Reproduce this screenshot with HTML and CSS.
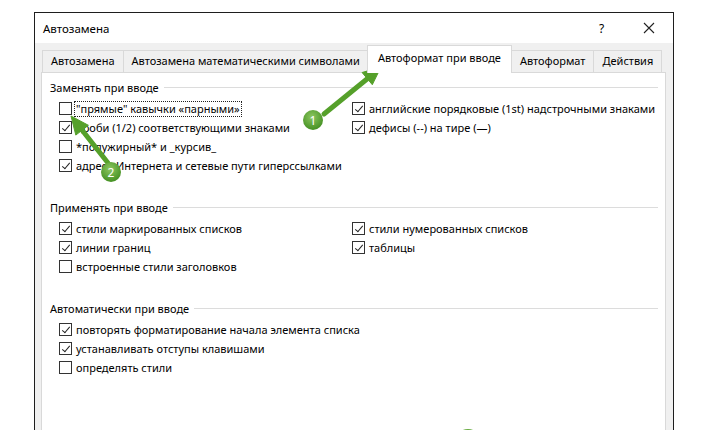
FILE: index.html
```html
<!DOCTYPE html>
<html lang="ru">
<head>
    <meta charset="UTF-8">
    <title>Автозамена</title>
    <link rel="stylesheet" href="styles.css">
</head>
<body>
    <div class="dialog">
        <div class="titlebar">
            <span class="title">Автозамена</span>
            <span class="help">?</span>
            <svg class="close" width="12" height="12" viewBox="0 0 12 12">
                <path d="M1 1 L11 11 M11 1 L1 11" stroke="#222" stroke-width="1.1" fill="none"/>
            </svg>
        </div>
        <div class="body">
            <div class="tabs">
                <div class="tab">Автозамена</div>
                <div class="tab">Автозамена математическими символами</div>
                <div class="tab active">Автоформат при вводе</div>
                <div class="tab">Автоформат</div>
                <div class="tab">Действия</div>
            </div>
            <div class="panel">
                <div class="group">
                    <div class="group-title"><span>Заменять при вводе</span><i></i></div>
                    <div class="options">
                        <div class="col">
                            <div class="opt"><span class="box"></span><span class="focus">"прямые" кавычки «парными»</span></div>
                            <div class="opt"><span class="box on"></span>дроби (1/2) соответствующими знаками</div>
                            <div class="opt"><span class="box"></span>*полужирный* и _курсив_</div>
                            <div class="opt"><span class="box on"></span>адреса Интернета и сетевые пути гиперссылками</div>
                        </div>
                        <div class="col">
                            <div class="opt"><span class="box on"></span>английские порядковые (1st) надстрочными знаками</div>
                            <div class="opt"><span class="box on"></span>дефисы (--) на тире (—)</div>
                        </div>
                    </div>
                </div>
                <div class="group">
                    <div class="group-title"><span>Применять при вводе</span><i></i></div>
                    <div class="options">
                        <div class="col">
                            <div class="opt"><span class="box on"></span>стили маркированных списков</div>
                            <div class="opt"><span class="box on"></span>линии границ</div>
                            <div class="opt"><span class="box"></span>встроенные стили заголовков</div>
                        </div>
                        <div class="col">
                            <div class="opt"><span class="box on"></span>стили нумерованных списков</div>
                            <div class="opt"><span class="box on"></span>таблицы</div>
                        </div>
                    </div>
                </div>
                <div class="group">
                    <div class="group-title"><span>Автоматически при вводе</span><i></i></div>
                    <div class="options">
                        <div class="col">
                            <div class="opt"><span class="box on"></span>повторять форматирование начала элемента списка</div>
                            <div class="opt"><span class="box on"></span>устанавливать отступы клавишами</div>
                            <div class="opt"><span class="box"></span>определять стили</div>
                        </div>
                    </div>
                </div>
            </div>
        </div>
    </div>

    <!-- annotation arrows drawn over the screenshot -->
    <svg class="marks" width="714" height="430" viewBox="0 0 714 430">
        <defs>
            <radialGradient id="dot" cx="0.45" cy="0.35" r="0.7">
                <stop offset="0" stop-color="#8cc760"/>
                <stop offset="1" stop-color="#3f8c1e"/>
            </radialGradient>
        </defs>
        <g fill="#55a02a" stroke="#55a02a">
            <line x1="324" y1="114" x2="367" y2="79" stroke-width="5" stroke-linecap="round"/>
            <polygon points="381,67 372.3,84.7 362.1,72.5" stroke-width="1"/>
            <line x1="108" y1="163" x2="82" y2="130" stroke-width="5" stroke-linecap="round"/>
            <polygon points="71,116 88.4,125.3 75.8,135.1" stroke-width="1"/>
        </g>
        <circle cx="313" cy="120" r="10" fill="url(#dot)"/>
        <text x="313" y="124.5" class="num">1</text>
        <circle cx="111" cy="172" r="10" fill="url(#dot)"/>
        <text x="111" y="176.5" class="num">2</text>
        <circle cx="468" cy="442" r="13" fill="url(#dot)"/>
    </svg>
</body>
</html>
```

FILE: styles.css
```css
body {
    margin: 0;
    background: #fff;
    font-family: "Noto Sans", "Open Sans", sans-serif;
    font-size: 11px;
    color: #000;
    overflow: hidden;
    height: 430px;
    position: relative;
}
.dialog {
    margin: 12px 0 0 34px;
    width: 638px;
    height: 417px;
    border: 1px solid #1e1e1e;
    border-bottom: none;
    background: #f0f0f0;
    overflow: hidden;
}
.titlebar {
    height: 30px;
    background: #fff;
    display: flex;
    align-items: center;
    padding: 0 0 0 8px;
}
.title {
    flex: 1;
    font-size: 11.5px;
}
.help {
    font-size: 12px;
    width: 44px;
}
.close {
    margin-right: 18px;
}
.body {
    padding: 3px 7px 0 6px;
}
.tabs {
    display: flex;
    align-items: flex-end;
    padding-left: 1px;
    height: 26px;
}
.tab {
    height: 21px;
    line-height: 20px;
    padding: 0 8px;
    border: 1px solid #d9d9d9;
    border-bottom: none;
    border-right: none;
    background: #f0f0f0;
    white-space: nowrap;
}
.tab:nth-child(5) {
    border-right: 1px solid #d9d9d9;
}
.tab.active {
    height: 27px;
    line-height: 24px;
    padding: 0 10px;
    margin: 0 -2px -1px -1px;
    background: #fff;
    border-right: 1px solid #d9d9d9;
    position: relative;
    z-index: 1;
}
.tab.active + .tab {
    border-left: none;
    margin-left: 2px;
}
.panel {
    background: #fff;
    border: 1px solid #d9d9d9;
    height: 400px;
    padding: 6px 7px 0 8px;
}
.group + .group {
    margin-top: 24px;
}
.group-title {
    display: flex;
    align-items: center;
    height: 16px;
}
.group-title i {
    flex: 1;
    height: 1px;
    background: #dcdcdc;
    margin-left: 5px;
}
.options {
    display: flex;
    padding-left: 9px;
    margin-top: 4px;
}
.col {
    width: 293px;
}
.opt {
    height: 19px;
    display: flex;
    align-items: center;
    white-space: nowrap;
}
.box {
    width: 11px;
    height: 11px;
    border: 1px solid #333;
    background: #fff;
    margin-right: 4px;
    flex: none;
    position: relative;
}
.box.on::after {
    content: "";
    position: absolute;
    left: 3.5px;
    top: 0.5px;
    width: 3px;
    height: 7px;
    border: solid #222;
    border-width: 0 1.3px 1.3px 0;
    transform: rotate(40deg);
}
.focus {
    outline: 1px dotted #222;
    outline-offset: 0;
    padding: 0 1px;
    margin-left: -1px;
    line-height: 14px;
}
.marks {
    position: absolute;
    left: 0;
    top: 0;
    pointer-events: none;
}
.num {
    fill: #fff;
    font-size: 12px;
    text-anchor: middle;
    font-family: "Noto Sans", sans-serif;
}
```
